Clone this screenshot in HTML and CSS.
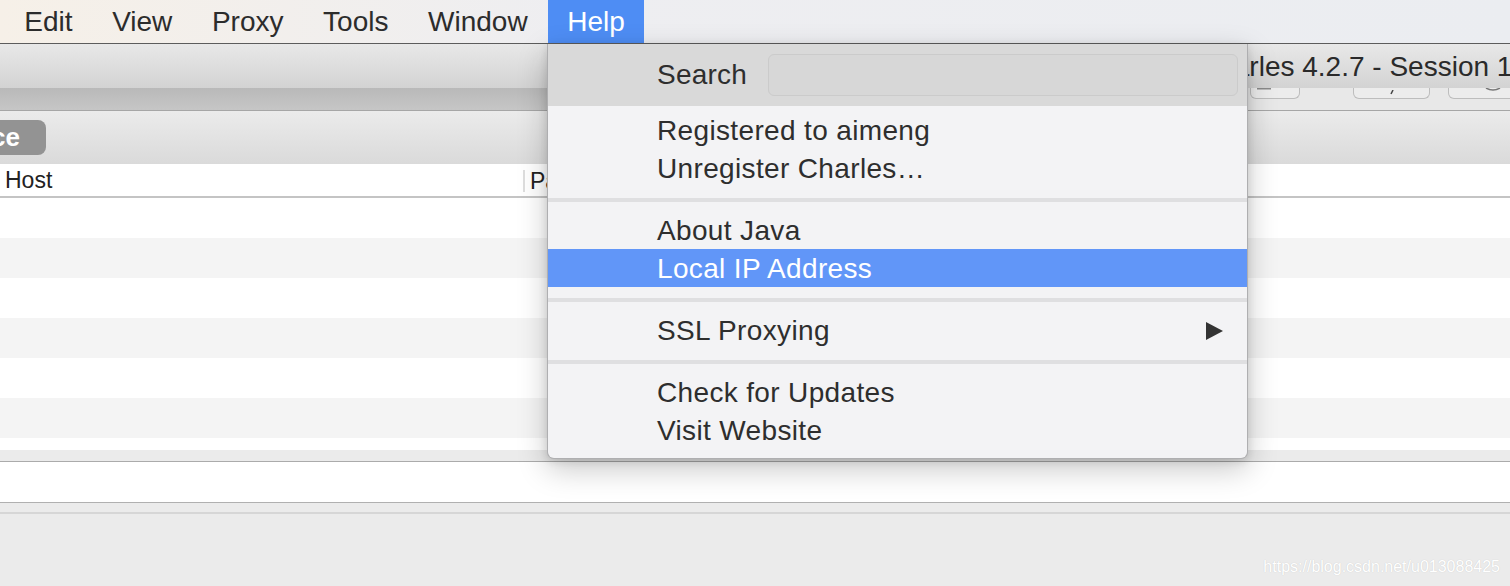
FILE: index.html
```html
<!DOCTYPE html>
<html lang="en">
<head>
  <meta charset="UTF-8" />
  <title>Charles 4.2.7 - Session 1</title>
  <link rel="stylesheet" href="styles.css">
</head>
<body>
  <div class="menubar">
    <span class="menu-item">Edit</span>
    <span class="menu-item">View</span>
    <span class="menu-item">Proxy</span>
    <span class="menu-item">Tools</span>
    <span class="menu-item">Window</span>
    <span class="menu-item active">Help</span>
  </div>

  <div class="titlebar">
    <span class="title">Charles 4.2.7 - Session 1</span>
  </div>

  <div class="toolband">
    <div class="band-left"></div>
    <div class="band-right">
      <div class="tool-btn b1"><svg width="14" height="3"><rect x="0" y="0" width="14" height="1.5" fill="#8a8a8a"/></svg></div>
      <div class="tool-btn b2"><svg width="6" height="5"><path d="M4 0 L2 4" stroke="#444" stroke-width="1.5"/></svg></div>
      <div class="tool-btn b3"><svg width="16" height="4"><path d="M1 0 Q8 4 15 0" stroke="#777" stroke-width="1.5" fill="none"/></svg></div>
    </div>
  </div>

  <div class="tabbar">
    <div class="tabs">
      <span class="tab selected">Sequence</span>
    </div>
  </div>

  <div class="table">
    <div class="thead">
      <div class="th host">Host</div>
      <div class="th path">Path</div>
    </div>
    <div class="row"></div>
    <div class="row alt"></div>
    <div class="row"></div>
    <div class="row alt"></div>
    <div class="row"></div>
    <div class="row alt"></div>
    <div class="row part"></div>
  </div>

  <div class="split"></div>
  <div class="filter"></div>
  <div class="status"></div>

  <div class="dropdown">
    <div class="search-row">
      <span class="search-label">Search</span>
      <div class="search-field"></div>
    </div>
    <div class="group first">
      <div class="item">Registered to aimeng</div>
      <div class="item">Unregister Charles…</div>
    </div>
    <div class="sep"></div>
    <div class="group">
      <div class="item">About Java</div>
      <div class="item hl">Local IP Address</div>
    </div>
    <div class="sep"></div>
    <div class="group">
      <div class="item sub">
        <span>SSL Proxying</span>
        <svg class="arrow" width="17" height="18" viewBox="0 0 17 18"><polygon points="0,0 17,9 0,18" fill="#333"/></svg>
      </div>
    </div>
    <div class="sep"></div>
    <div class="group last">
      <div class="item">Check for Updates</div>
      <div class="item">Visit Website</div>
    </div>
  </div>

  <div class="watermark">https://blog.csdn.net/u013088425</div>
</body>
</html>
```

FILE: styles.css
```css
* {
  margin: 0;
  padding: 0;
  box-sizing: border-box;
}
html, body {
  width: 1510px;
  height: 586px;
  overflow: hidden;
  background: #ebebeb;
  font-family: "Liberation Sans", Arial, sans-serif;
  color: #2c2c2c;
}
body {
  position: relative;
}

/* top menu bar */
.menubar {
  height: 44px;
  display: flex;
  padding-left: 5px;
  background: linear-gradient(90deg, #f6f0e8 0%, #eeeef1 38%, #ebedf1 100%);
  border-bottom: 1px solid #5c5c5c;
}
.menu-item {
  font-size: 28px;
  line-height: 43px;
  padding: 0 19.3px;
  margin-right: 1px;
  color: #2c2c2c;
}
.menu-item.active {
  background: #4e8df4;
  color: #fff;
}

/* window title */
.titlebar {
  height: 44px;
  display: flex;
  padding-top: 2px;
  background: linear-gradient(#e8e8e8, #d3d3d3);
  white-space: nowrap;
  overflow: hidden;
}
.title {
  margin-left: 1198px;
  font-size: 28px;
  line-height: 42px;
  color: #2a2a2a;
}

.toolband {
  height: 22px;
  display: flex;
}
.band-left {
  flex: 1;
  background: linear-gradient(#b9b9b9, #c6c6c6);
}
.band-right {
  width: 262px;
  display: flex;
  align-items: flex-start;
  background: #e8e8e8;
  padding-left: 2px;
  overflow: hidden;
}
.tool-btn {
  flex-shrink: 0;
  height: 11px;
  border: 1px solid #bdbdbd;
  border-top: none;
  border-radius: 0 0 6px 6px;
  background: #ececec;
  display: flex;
  justify-content: center;
}
.b1 { width: 50px; justify-content: flex-start; padding-left: 6px; }
.b2 { width: 77px; margin-left: 53px; padding-top: 2px; }
.b3 { width: 80px; margin-left: 18px; padding-left: 10px; }

/* structure / sequence tabs */
.tabbar {
  height: 54px;
  border-top: 1px solid #a6a6a6;
  background: linear-gradient(#ebebeb, #dadada);
}
.tabs {
  width: 46px;
  display: flex;
  justify-content: flex-end;
  padding-top: 9px;
}
.tab {
  flex-shrink: 0;
  height: 35px;
  line-height: 35px;
  padding: 0 26px 0 20px;
  font-size: 26px;
  font-weight: bold;
  color: #fff;
  border-radius: 8px;
  white-space: nowrap;
}
.tab.selected {
  background: #939393;
}

/* request table */
.table {
  background: #fff;
}
.thead {
  height: 34px;
  display: flex;
  border-bottom: 2px solid #c4c4c4;
}
.th {
  font-size: 23px;
  line-height: 32px;
  color: #222;
}
.host {
  width: 523px;
  padding-left: 5px;
}
.path {
  border-left: 2px solid #dedede;
  margin: 6px 0 4px;
  line-height: 22px;
  padding-left: 5px;
}
.row {
  height: 40px;
}
.row.alt {
  background: #f4f4f4;
}
.row.part {
  height: 12px;
}

.split {
  height: 11px;
  background: #ebebeb;
}
.filter {
  height: 42px;
  background: #fff;
  border-top: 1px solid #ababab;
  border-bottom: 1px solid #b0b0b0;
}
.status {
  height: 11px;
  border-bottom: 2px solid #d6d6d6;
}

/* help menu */
.dropdown {
  position: absolute;
  left: 547px;
  top: 44px;
  width: 701px;
  background: #f3f3f5;
  border: 1px solid rgba(0, 0, 0, 0.28);
  border-top: none;
  border-radius: 0 0 7px 7px;
  box-shadow: 0 10px 30px rgba(0, 0, 0, 0.22), 0 2px 8px rgba(0, 0, 0, 0.12);
}
.search-row {
  height: 62px;
  display: flex;
  align-items: center;
  padding: 0 9px 0 109px;
  background: #d9d9d9;
}
.search-label {
  font-size: 28px;
  color: #2e2e2e;
  letter-spacing: 0.2px;
  margin-right: 21px;
}
.search-field {
  flex: 1;
  height: 42px;
  border: 1px solid #cbcbcb;
  border-radius: 6px;
  background: #d7d7d7;
}
.group {
  padding: 9px 0 11px;
}
.group.first {
  padding-top: 5px;
}
.group.last {
  padding-bottom: 9px;
}
.item {
  height: 38px;
  line-height: 36px;
  padding: 2px 0 0 109px;
  font-size: 28px;
  letter-spacing: 0.35px;
  color: #2e2e2e;
}
.item.hl {
  background: #6196f8;
  color: #fff;
}
.item.sub {
  display: flex;
  align-items: center;
  justify-content: space-between;
  padding-right: 24px;
}
.sep {
  height: 4px;
  background: #dfdfe1;
}

.watermark {
  position: absolute;
  right: 10px;
  bottom: 10px;
  font-size: 16px;
  color: #fff;
  text-shadow: 0 0 1px rgba(0, 0, 0, 0.18);
}
```
